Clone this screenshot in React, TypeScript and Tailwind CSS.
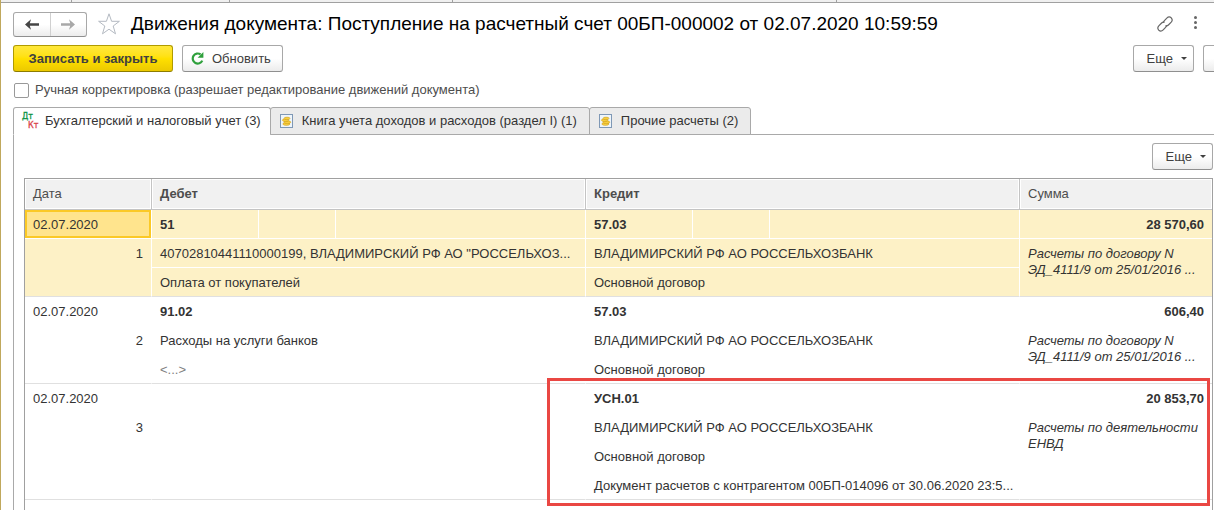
import type { ReactNode } from "react";
import clsx from "clsx";

type Entry = {
  id: number;
  date: string;
  debit: string[];
  credit: string[];
  sum: string;
  note: string[];
};

const EMPTY = "<...>";

const entries: Entry[] = [
  {
    id: 1,
    date: "02.07.2020",
    debit: ["51", '40702810441110000199, ВЛАДИМИРСКИЙ РФ АО "РОССЕЛЬХОЗ...', "Оплата от покупателей"],
    credit: ["57.03", "ВЛАДИМИРСКИЙ РФ АО РОССЕЛЬХОЗБАНК", "Основной договор"],
    sum: "28 570,60",
    note: ["Расчеты по договору N", "ЭД_4111/9 от 25/01/2016 ..."],
  },
  {
    id: 2,
    date: "02.07.2020",
    debit: ["91.02", "Расходы на услуги банков", EMPTY],
    credit: ["57.03", "ВЛАДИМИРСКИЙ РФ АО РОССЕЛЬХОЗБАНК", "Основной договор"],
    sum: "606,40",
    note: ["Расчеты по договору N", "ЭД_4111/9 от 25/01/2016 ..."],
  },
  {
    id: 3,
    date: "02.07.2020",
    debit: ["", "", "", ""],
    credit: [
      "УСН.01",
      "ВЛАДИМИРСКИЙ РФ АО РОССЕЛЬХОЗБАНК",
      "Основной договор",
      "Документ расчетов с контрагентом 00БП-014096 от 30.06.2020 23:5...",
    ],
    sum: "20 853,70",
    note: ["Расчеты по деятельности", "ЕНВД"],
  },
];

const buttonBase =
  "flex h-[27px] items-center rounded-[3px] border border-[#a8a8a8] border-b-[#8f8f8f] bg-linear-to-b from-white from-50% to-[#ececec] text-[#404040]";

function MoreButton() {
  return (
    <button type="button" className={clsx(buttonBase, "w-[61px] justify-end gap-2 pr-1.5")}>
      Еще
      <span className="border-x-3 border-t-3 border-x-transparent border-t-[#404040]" />
    </button>
  );
}

function Arrow({ className }: { className?: string }) {
  return (
    <svg viewBox="0 0 14 11" className={clsx("h-[11px] w-[14px]", className)}>
      <path d="M0 5.5 6 0.2 4.8 4.3H14V6.7H4.8L6 10.8Z" fill="currentColor" />
    </svg>
  );
}

function Star() {
  return (
    <svg viewBox="0 0 24 24" className="size-6" fill="none" stroke="#b4bac2">
      <path d="M12 1.8 14.6 9.3H22.4L16.2 14 18.5 21.8 12 17.2 5.5 21.8 7.8 14 1.6 9.3H9.4Z" />
    </svg>
  );
}

function Link() {
  return (
    <svg viewBox="0 0 16 16" className="size-4" fill="none" stroke="#666" strokeWidth="1.2" strokeLinecap="round">
      <path d="M6.2 6.4Q6.6 5.4 9.8 2.2 12 0 14.2 1.8 16.2 4 14.2 6.2L11.4 9Q10.2 10.2 8.8 9.9" />
      <path d="M9.8 9.6Q9.4 10.6 6.2 13.8 4 16 1.8 14.2-0.2 12 1.8 9.8L4.6 7Q5.8 5.8 7.2 6.1" />
    </svg>
  );
}

function Refresh() {
  return (
    <svg viewBox="0 0 13 13" className="size-[13px]">
      <path d="M9.6 2.4A5 5 0 1 0 11.3 8.6" fill="none" stroke="#2fa03c" strokeWidth="2.2" />
      <path d="M12.4 0V5.8H6.6Z" fill="#2fa03c" />
    </svg>
  );
}

function DebitCredit() {
  return (
    <svg viewBox="0 0 18 20" className="h-5 w-[18px] overflow-visible font-['DejaVu_Sans',sans-serif] text-[8px]">
      <text x="1" y="8" fill="#0b9444" stroke="#0b9444" strokeWidth="0.3">Дт</text>
      <text x="7" y="17" fill="#d9434a" stroke="#d9434a" strokeWidth="0.3">Кт</text>
    </svg>
  );
}

function Coins() {
  return (
    <svg viewBox="0 0 13 14" className="h-3.5 w-[13px]">
      <rect x="0.5" y="0.5" width="12" height="13" fill="#eef5fb" stroke="#7f98b5" />
      <g fill="#f7cf3e" stroke="#c9971c" strokeWidth="0.5">
        <ellipse cx="6.4" cy="10" rx="3.6" ry="1.4" />
        <ellipse cx="7.4" cy="8.2" rx="3.4" ry="1.4" />
        <ellipse cx="5.6" cy="6.2" rx="3.2" ry="1.4" />
        <ellipse cx="7" cy="4.4" rx="3" ry="1.3" />
      </g>
    </svg>
  );
}

function Tab({ icon, active, children }: { icon: ReactNode; active?: boolean; children: ReactNode }) {
  return (
    <button
      type="button"
      role="tab"
      aria-selected={!!active}
      className={clsx(
        "-mr-px flex h-7 items-center rounded-t-[3px] border border-[#a9a9a9] text-[#333]",
        active ? "gap-1.5 border-b-white bg-white pr-[9px] pl-[7px]" : "gap-[9px] bg-[#ebebeb] pr-3 pl-[9px]",
      )}
    >
      {icon}
      {children}
    </button>
  );
}

function EntryRows({ entry, selected }: { entry: Entry; selected: boolean }) {
  const line = selected ? "border-white" : "border-transparent";
  const last = entry.credit.length - 1;

  return (
    <tbody className={clsx(selected && "bg-[#fdf1c6]")}>
      {entry.credit.map((credit, i) => {
        const edge = i === last ? "border-b-[#e0e0e0]" : "";
        const cell = clsx("h-[29px] truncate border-r border-b pt-0.5 pr-1 pl-2", line, edge);
        const debit = entry.debit[i];

        return (
          <tr key={i}>
            {i === 0 && (
              <td
                className={clsx(
                  "h-[29px] border-r border-b px-2 pt-0.5",
                  line,
                  selected && "bg-[#ffe48d] inset-ring-2 inset-ring-[#fbc926]",
                )}
              >
                {entry.date}
              </td>
            )}
            {i === 1 && (
              <td
                rowSpan={last}
                className={clsx(
                  "border-r border-b border-b-[#e0e0e0] px-2 pt-[7px] text-right align-top",
                  selected ? "border-r-white" : "border-r-transparent",
                )}
              >
                {entry.id}
              </td>
            )}
            {i === 0 ? (
              <>
                <td className={clsx(cell, "font-bold")}>{debit}</td>
                <td className={cell} />
                <td className={cell} />
                <td className={clsx(cell, "font-bold")}>{credit}</td>
                <td className={cell} />
                <td className={cell} />
                <td className={clsx("h-[29px] border-b px-2 pt-0.5 text-right font-bold", line)}>{entry.sum}</td>
              </>
            ) : (
              <>
                <td colSpan={3} className={clsx(cell, debit === EMPTY && "text-[#808080]")}>
                  {debit}
                </td>
                <td colSpan={3} className={cell}>{credit}</td>
              </>
            )}
            {i === 1 && (
              <td
                rowSpan={last}
                className="border-b border-b-[#e0e0e0] pt-[7px] pl-2 align-top leading-4 whitespace-nowrap italic"
              >
                {entry.note.map((text) => (
                  <div key={text}>{text}</div>
                ))}
              </td>
            )}
          </tr>
        );
      })}
    </tbody>
  );
}

export default function App() {
  const th = "border-r border-b border-[#c4c4c4] px-2 text-left inset-ring inset-ring-white";

  return (
    <div className="flex min-h-screen flex-col overflow-hidden border-l border-[#c0a85c] bg-white font-['Liberation_Sans',Arial,sans-serif] text-[13px] leading-4 text-[#333]">
      <div className="flex h-[3px] border-b border-[#a0a0a0] bg-[#f0f0f0]">
        <div className="w-[71px] border-r border-[#a0a0a0]" />
        <div className="w-[158px] border-r border-[#a0a0a0]" />
        <div className="w-[223px] border-r border-[#a0a0a0]" />
        <div className="w-[384px] border-r border-[#a0a0a0]" />
      </div>

      <header className="flex h-[42px] items-center pl-3">
        <div className="flex h-[25px] w-[74px] rounded-[3px] border border-[#a8a8a8] border-b-[#8f8f8f] bg-linear-to-b from-white from-50% to-[#ececec]">
          <button
            type="button"
            aria-label="Назад"
            className="flex flex-1 items-center justify-center border-r border-[#d0d0d0] text-[#444]"
          >
            <Arrow />
          </button>
          <button type="button" aria-label="Вперед" className="flex flex-1 items-center justify-center text-[#a8a8a8]">
            <Arrow className="rotate-180" />
          </button>
        </div>
        <button type="button" aria-label="В избранное" className="ml-2.5">
          <Star />
        </button>
        <h1 className="ml-2.5 text-[19px] leading-6 whitespace-nowrap text-black">
          Движения документа: Поступление на расчетный счет 00БП-000002 от 02.07.2020 10:59:59
        </h1>
        <div className="ml-auto flex items-center gap-5 pr-4">
          <button type="button" aria-label="Ссылка">
            <Link />
          </button>
          <button type="button" aria-label="Меню" className="flex w-[5px] flex-col items-center gap-[2px] pb-1">
            <span className="size-[3px] rounded-full bg-[#666]" />
            <span className="size-[3px] rounded-full bg-[#666]" />
            <span className="size-[3px] rounded-full bg-[#666]" />
          </button>
        </div>
      </header>

      <div className="flex items-center gap-[9px] pl-3">
        <button
          type="button"
          className="h-[27px] w-40 rounded-[3px] border border-[#b09b00] border-b-[#8d7c00] bg-linear-to-b from-[#ffe83a] via-[#ffe000] to-[#ecc900] font-bold text-[#404040]"
        >
          Записать и закрыть
        </button>
        <button type="button" className={clsx(buttonBase, "w-[101px] gap-2 pl-2")}>
          <Refresh />
          Обновить
        </button>
        <div className="ml-auto flex gap-[9px]">
          <MoreButton />
          <button
            type="button"
            aria-label="Справка"
            className={clsx(buttonBase, "w-[11px] rounded-r-none border-r-0")}
          />
        </div>
      </div>

      <label className="mt-[9px] flex h-[18px] items-center gap-1.5 pl-[13px] text-[#4d4d4d]">
        <input type="checkbox" className="size-[15px] appearance-none rounded-[2px] border border-[#999] bg-white" />
        Ручная корректировка (разрешает редактирование движений документа)
      </label>

      <div role="tablist" className="relative z-10 mt-2 -mb-px flex pl-3">
        <Tab icon={<DebitCredit />} active>
          Бухгалтерский и налоговый учет (3)
        </Tab>
        <Tab icon={<Coins />}>Книга учета доходов и расходов (раздел I) (1)</Tab>
        <Tab icon={<Coins />}>Прочие расчеты (2)</Tab>
      </div>

      <main className="ml-3 flex flex-1 flex-col border-t border-l border-[#a9a9a9] pt-2 pr-px pl-2.5">
        <div className="mb-2 flex justify-end">
          <MoreButton />
        </div>

        <div className="relative flex-1 border-x border-t border-[#a0a0a0]">
          <table className="w-full table-fixed border-separate border-spacing-0">
            <colgroup>
              <col className="w-[127px]" />
              <col className="w-[107px]" />
              <col className="w-[77px]" />
              <col />
              <col className="w-[107px]" />
              <col className="w-[77px]" />
              <col />
              <col className="w-[192px]" />
            </colgroup>
            <thead className="bg-[#f1f1f1] text-[#4d4d4d]">
              <tr>
                <th className={clsx(th, "h-[31px] font-normal")}>Дата</th>
                <th colSpan={3} className={clsx(th, "font-bold")}>Дебет</th>
                <th colSpan={3} className={clsx(th, "font-bold")}>Кредит</th>
                <th className={clsx(th, "border-r-0 font-normal")}>Сумма</th>
              </tr>
            </thead>
            {entries.map((entry) => (
              <EntryRows key={entry.id} entry={entry} selected={entry.id === 1} />
            ))}
          </table>
          {/* highlight frame around the credit side of the last entry */}
          <div className="pointer-events-none absolute top-[199px] right-0.5 left-[44%] h-32 border-3 border-[#ea4743]" />
        </div>
      </main>
    </div>
  );
}
